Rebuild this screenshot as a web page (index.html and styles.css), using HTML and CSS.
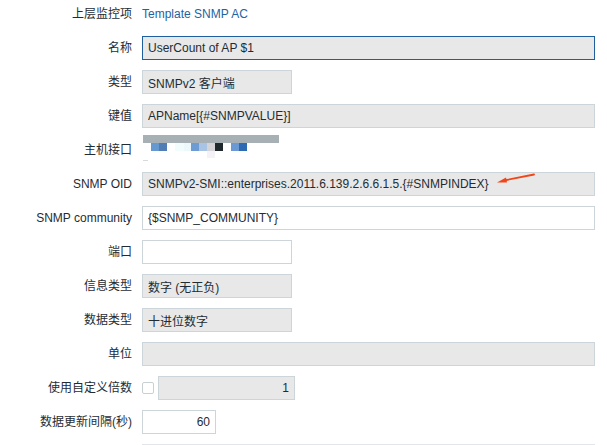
FILE: index.html
```html
<!DOCTYPE html>
<html lang="zh-CN">
<head>
<meta charset="utf-8">
<title>监控项</title>
<link rel="stylesheet" href="styles.css">
</head>
<body>
<form class="form">
  <label class="lbl">上层监控项</label>
  <div class="ctl"><a class="link" href="#">Template SNMP AC</a></div>

  <label class="lbl">名称</label>
  <div class="ctl"><input class="field full ro focus" value="UserCount of AP $1" readonly></div>

  <label class="lbl">类型</label>
  <div class="ctl"><input class="field short ro" value="SNMPv2 客户端" readonly></div>

  <label class="lbl">键值</label>
  <div class="ctl"><input class="field full ro" value="APName[{#SNMPVALUE}]" readonly></div>

  <label class="lbl">主机接口</label>
  <div class="ctl">
    <div class="blur">
      <div class="bar"></div>
      <div class="px-row">
        <span class="px a"></span><span class="px b"></span>
        <span class="px gap-sm c"></span><span class="px d"></span>
        <span class="px e"></span><span class="px f"></span><span class="px g"></span><span class="px h"></span>
        <span class="px gap i"></span><span class="px j"></span>
      </div>
      <div class="px-row2"><span class="px k"></span></div>
      <div class="smudge"></div>
    </div>
  </div>

  <label class="lbl">SNMP OID</label>
  <div class="ctl rel">
    <input class="field full ro" value="SNMPv2-SMI::enterprises.2011.6.139.2.6.6.1.5.{#SNMPINDEX}" readonly>
    <svg class="arrow" width="40" height="12" viewBox="0 0 40 12">
      <path d="M38 1.5 L8 7.5" stroke="#f0461a" stroke-width="1.8" stroke-linecap="round" fill="none"/>
      <path d="M1 9.5 L10 4.5 L11 9.5 Z" fill="#f0461a"/>
    </svg>
  </div>

  <label class="lbl">SNMP community</label>
  <div class="ctl"><input class="field full" value="{$SNMP_COMMUNITY}"></div>

  <label class="lbl">端口</label>
  <div class="ctl"><input class="field short" value=""></div>

  <label class="lbl">信息类型</label>
  <div class="ctl"><input class="field short ro" value="数字 (无正负)" readonly></div>

  <label class="lbl">数据类型</label>
  <div class="ctl"><input class="field short ro" value="十进位数字" readonly></div>

  <label class="lbl">单位</label>
  <div class="ctl"><input class="field full ro" value="" readonly></div>

  <label class="lbl">使用自定义倍数</label>
  <div class="ctl inline">
    <input type="checkbox" class="check">
    <input class="field mult ro num" value="1" readonly>
  </div>

  <label class="lbl">数据更新间隔(秒)</label>
  <div class="ctl"><input class="field tiny num" value="60"></div>

  <span class="lbl"></span>
  <div class="ctl top"><div class="edge"></div></div>
</form>
</body>
</html>
```

FILE: styles.css
```css
html, body {
  margin: 0;
  padding: 0;
  background: #ffffff;
  overflow: hidden;
}

body {
  font-family: "Liberation Sans", Arial, "Noto Sans CJK SC", sans-serif;
  font-size: 12px;
  color: #1f2c33;
  width: 607px;
  height: 445px;
}

.form {
  display: grid;
  grid-template-columns: 132px 453px;
  grid-template-rows: repeat(13, 24px) 1px;
  column-gap: 10px;
  row-gap: 10px;
  padding-top: 2px;
}

.lbl {
  text-align: right;
  line-height: 24px;
  white-space: nowrap;
  color: #1f2c33;
}

.ctl {
  display: flex;
  align-items: center;
  min-width: 0;
}

.top {
  align-items: flex-start;
}

.edge {
  width: 453px;
  height: 1px;
  background: #e3e6e8;
}

.rel {
  position: relative;
}

.link {
  color: #1f63a0;
  text-decoration: none;
}

.field {
  box-sizing: border-box;
  height: 24px;
  margin: 0;
  padding: 0 5px;
  border: 1px solid #ccd5d9;
  border-radius: 0;
  background: #ffffff;
  font-family: "Liberation Sans", Arial, "Noto Sans CJK SC", sans-serif;
  font-size: 12px;
  color: #1f2c33;
  outline: none;
}

.ro {
  background: #e8e8e8;
}

.focus {
  border-color: #1f5f9e;
}

.full { width: 453px; }
.short { width: 150px; }
.mult { width: 137px; margin-left: 4px; }
.tiny { width: 74px; }
.num { text-align: right; }

.inline {
  gap: 0;
}

.check {
  appearance: none;
  -webkit-appearance: none;
  box-sizing: border-box;
  width: 12px;
  height: 12px;
  margin: 0;
  border: 1px solid #c9d0d3;
  border-radius: 2px;
  background: #ffffff;
}

.arrow {
  position: absolute;
  left: 354px;
  top: 1px;
}

/* blurred host interface */
.blur {
  align-self: flex-start;
  margin-top: -3px;
  margin-left: 1px;
  display: flex;
  flex-direction: column;
}

.bar {
  width: 136px;
  height: 8px;
  background: #a7b0b4;
}

.px-row {
  display: flex;
  margin-left: 8px;
}

.px {
  display: block;
  width: 8px;
  height: 8px;
}

.gap-sm { margin-left: 8px; }
.gap { margin-left: 8px; }

.a { background: #6699cf; }
.b { background: #4f7db4; }
.c { background: #f3fcfd; width: 9px; }
.d { background: #ecf8fb; width: 7px; }
.e { background: #6d9bd4; }
.f { background: #a9c3e4; }
.g { background: #d5d2d8; }
.h { background: #1f292d; }
.i { background: #6a99d3; }
.j { background: #2e69b3; }

.px-row2 {
  display: flex;
  margin-left: 64px;
}

.k { background: #f4f1f7; height: 7px; }

.smudge {
  width: 5px;
  height: 1px;
  margin-top: 2px;
  background: #d7dadb;
}
```
